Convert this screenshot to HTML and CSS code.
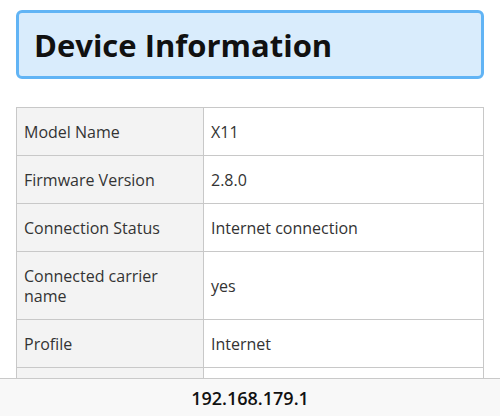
FILE: index.html
```html
<!DOCTYPE html>
<html lang="en">
<head>
    <meta charset="UTF-8" />
    <meta name="viewport" content="width=device-width, initial-scale=1" />
    <title>Device Information</title>
    <link rel="stylesheet" href="styles.css">
</head>
<body>

<div class="page">
    <h1 class="title">Device Information</h1>

    <table class="info">
        <tr>
            <th>Model Name</th>
            <td>X11</td>
        </tr>
        <tr>
            <th>Firmware Version</th>
            <td>2.8.0</td>
        </tr>
        <tr>
            <th>Connection Status</th>
            <td>Internet connection</td>
        </tr>
        <tr>
            <th>Connected carrier name</th>
            <td>yes</td>
        </tr>
        <tr>
            <th>Profile</th>
            <td>Internet</td>
        </tr>
        <tr>
            <th></th>
            <td></td>
        </tr>
    </table>
</div>

<div class="address-bar">192.168.179.1</div>

</body>
</html>
```

FILE: styles.css
```css
body {
    font-family: "Open Sans", "Noto Sans CJK JP", sans-serif;
    background: #fff;
    color: #333;
    margin: 0;
}
.page {
    padding: 10px 16px;
}
.title {
    margin: 0;
    height: 63px;
    box-sizing: content-box;
    display: flex;
    align-items: center;
    padding: 0 15px;
    background: #d9ecfc;
    border: 3px solid #61b4f5;
    border-radius: 6px;
    font-size: 31px;
    font-weight: 700;
    color: #111;
}
.info {
    width: 100%;
    margin-top: 28px;
    border-collapse: collapse;
    font-size: 16px;
}
.info th, .info td {
    border: 1px solid #c8c8c8;
    padding: 0 7px;
    height: 47px;
    text-align: left;
    font-weight: normal;
    line-height: 20px;
}
.info th {
    width: 172px;
    background: #f3f3f3;
}
.info tr:nth-child(4) th {
    height: 67px;
}
.address-bar {
    position: fixed;
    left: 0;
    right: 0;
    bottom: 0;
    height: 37px;
    border-top: 1px solid #c9c9c9;
    background: #f8f8f8;
    display: flex;
    align-items: center;
    justify-content: center;
    font-size: 18px;
    font-weight: 600;
    color: #111;
}
```
